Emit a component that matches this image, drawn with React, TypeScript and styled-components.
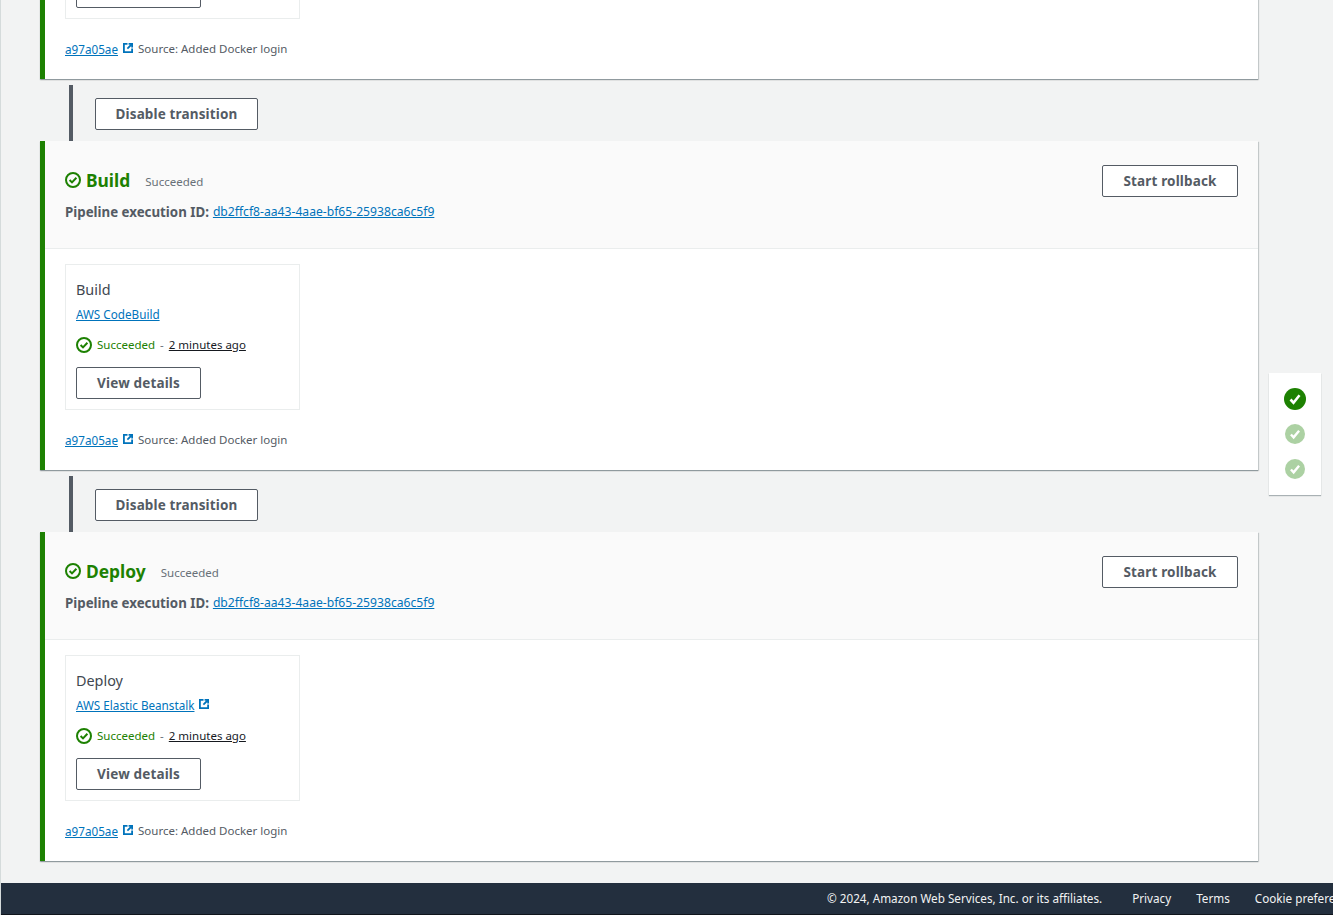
import React from "react";
import styled, { createGlobalStyle } from "styled-components";

const GlobalStyle = createGlobalStyle`
  html, body {
    margin: 0;
    padding: 0;
    height: 100%;
    overflow: hidden;
    background: #f2f3f3;
    font-family: "Noto Sans", "Liberation Sans", sans-serif;
  }
`;

interface Action {
  title: string;
  provider: string;
  external: boolean;
}

interface Stage {
  name: string;
  action: Action;
}

const stages: Stage[] = [
  { name: "Source", action: { title: "Source", provider: "GitHub (Version 2)", external: true } },
  { name: "Build", action: { title: "Build", provider: "AWS CodeBuild", external: false } },
  { name: "Deploy", action: { title: "Deploy", provider: "AWS Elastic Beanstalk", external: true } },
];

const CheckCircle = () => (
  <svg width="16" height="16" viewBox="0 0 16 16" fill="none" stroke="#1d8102" strokeWidth="2">
    <circle cx="8" cy="8" r="7" />
    <path d="M4.6 8l2.4 2.4 4.4-4.6" />
  </svg>
);

const ExternalIcon = () => (
  <IconOffset>
    <svg width="10" height="10" viewBox="0 0 10 10" fill="none" stroke="#0073bb" strokeWidth="1.8">
      <path d="M4.5 0.9H0.9v8.2h8.2V5.5" />
      <path d="M5.6 0.9h3.5v3.5" />
      <path d="M9 1L4.4 5.6" />
    </svg>
  </IconOffset>
);

const RailDot = ({ faded }: { faded?: boolean }) => (
  <DotIcon $faded={faded} viewBox="0 0 22 22">
    <circle cx="11" cy="11" r="11" fill="#1d8102" />
    <path d="M6.5 11.5l3 3.2 6-7.4" fill="none" stroke="#fff" strokeWidth="2.6" />
  </DotIcon>
);

const DotIcon = styled.svg<{ $faded?: boolean }>`
  width: ${(p) => (p.$faded ? 20 : 22)}px;
  height: ${(p) => (p.$faded ? 20 : 22)}px;
  opacity: ${(p) => (p.$faded ? 0.36 : 1)};
  margin-bottom: ${(p) => (p.$faded ? 0 : -1)}px;
`;

const IconOffset = styled.span`
  display: inline-flex;
  position: relative;
  top: -1px;
`;

const Page = styled.div`
  height: 915px;
  display: flex;
  flex-direction: column;
  position: relative;
  overflow: hidden;
  border-left: 1px solid #d5dbdb;
  box-sizing: border-box;
`;

const Main = styled.main`
  flex: 1;
  min-height: 0;
  display: flex;
  flex-direction: column;
  justify-content: flex-end;
  padding: 0 75px 22px 39px;
`;

const StageCard = styled.section`
  flex: none;
  background: #fff;
  border-left: 5px solid #1d8102;
  box-shadow: 0 1px 1px 0 rgba(0, 28, 36, 0.3), 1px 1px 1px 0 rgba(0, 28, 36, 0.15);
`;

const StageHeader = styled.header`
  height: 108px;
  box-sizing: border-box;
  padding: 24px 20px 0;
  display: flex;
  justify-content: space-between;
  align-items: flex-start;
  background: #fafafa;
  border-bottom: 1px solid #eaeded;
`;

const TitleRow = styled.div`
  display: flex;
  align-items: center;
  height: 30px;
`;

const StageTitle = styled.h2`
  margin: 0 15px 0 5px;
  font-size: 17.4px;
  line-height: 30px;
  font-weight: 700;
  color: #1d8102;
`;

const StageStatus = styled.span`
  font-size: 11.5px;
  color: #687078;
  position: relative;
  top: 1px;
`;

const ExecutionRow = styled.div`
  margin-top: 7px;
  font-size: 13.3px;
  line-height: 20px;
  display: flex;
  gap: 4px;
  align-items: center;
`;

const ExecutionLabel = styled.span`
  font-weight: 700;
  color: #545b64;
`;

const TextLink = styled.a<{ $size?: number }>`
  font-size: ${(p) => p.$size ?? 11.7}px;
  color: #0073bb;
  text-decoration: underline;
`;

const Button = styled.button<{ $width: number }>`
  width: ${(p) => p.$width}px;
  height: 32px;
  flex: none;
  padding: 0;
  background: #fff;
  border: 1px solid #545b64;
  border-radius: 2px;
  color: #545b64;
  font-family: inherit;
  font-size: 13.5px;
  font-weight: 700;
  letter-spacing: 0.15px;
`;

const StageBody = styled.div`
  padding: 15px 20px 0;
  height: 221px;
  box-sizing: border-box;
`;

const ActionCard = styled.div`
  width: 235px;
  height: 146px;
  box-sizing: border-box;
  border: 1px solid #eaeded;
  padding: 15px 10px 0;
`;

const ActionTitle = styled.div`
  font-size: 14.4px;
  line-height: 20px;
  color: #414750;
`;

const ProviderRow = styled.div`
  margin-top: 4px;
  display: flex;
  align-items: center;
  gap: 5px;
  line-height: 20px;
`;

const StatusRow = styled.div`
  margin-top: 11px;
  margin-bottom: 12px;
  display: flex;
  align-items: center;
  font-size: 11.5px;
  line-height: 20px;
  gap: 5px;
`;

const StatusText = styled.span`
  color: #1d8102;
`;

const Separator = styled.span`
  color: #687078;
`;

const TimeAgo = styled.span`
  color: #16191f;
  text-decoration: underline;
`;

const RevisionRow = styled.div`
  margin-top: 20px;
  display: flex;
  align-items: center;
  gap: 5px;
  font-size: 11.5px;
  line-height: 20px;
  color: #545b64;
`;

const Transition = styled.div`
  flex: none;
  height: 62px;
  display: flex;
  align-items: flex-start;
  padding-left: 29px;
  box-sizing: border-box;
`;

const TransitionBar = styled.div`
  width: 4px;
  height: 56px;
  margin-top: 6px;
  background: #545b64;
`;

const TransitionButton = styled(Button)`
  margin: 19px 0 0 22px;
`;

const Rail = styled.aside`
  position: absolute;
  top: 373px;
  left: 1268px;
  width: 52px;
  height: 122px;
  box-sizing: border-box;
  padding-top: 15px;
  background: #fff;
  box-shadow: 0 1px 1px 0 rgba(0, 28, 36, 0.3);
  display: flex;
  flex-direction: column;
  align-items: center;
  gap: 15px;
`;

const Footer = styled.footer`
  flex: none;
  height: 32px;
  box-sizing: border-box;
  background: #232f3e;
  border-bottom: 1px solid #10151c;
  display: flex;
  align-items: center;
  white-space: nowrap;
  padding: 0 0 2px 826px;
  font-size: 11.7px;
  color: #f2f3f3;
`;

const FooterItem = styled.span<{ $gap: number }>`
  margin-right: ${(p) => p.$gap}px;
`;

export default function App() {
  return (
    <Page>
      <GlobalStyle />
      <Main>
        {stages.map((stage, i) => (
          <React.Fragment key={stage.name}>
            {i > 0 && (
              <Transition>
                <TransitionBar />
                <TransitionButton $width={163}>Disable transition</TransitionButton>
              </Transition>
            )}
            <StageCard>
              <StageHeader>
                <div>
                  <TitleRow>
                    <CheckCircle />
                    <StageTitle>{stage.name}</StageTitle>
                    <StageStatus>Succeeded</StageStatus>
                  </TitleRow>
                  <ExecutionRow>
                    <ExecutionLabel>Pipeline execution ID:</ExecutionLabel>
                    <TextLink $size={12.15}>db2ffcf8-aa43-4aae-bf65-25938ca6c5f9</TextLink>
                  </ExecutionRow>
                </div>
                <Button $width={136}>Start rollback</Button>
              </StageHeader>
              <StageBody>
                <ActionCard>
                  <ActionTitle>{stage.action.title}</ActionTitle>
                  <ProviderRow>
                    <TextLink>{stage.action.provider}</TextLink>
                    {stage.action.external && <ExternalIcon />}
                  </ProviderRow>
                  <StatusRow>
                    <CheckCircle />
                    <StatusText>Succeeded</StatusText>
                    <Separator>-</Separator>
                    <TimeAgo>2 minutes ago</TimeAgo>
                  </StatusRow>
                  <Button $width={125}>View details</Button>
                </ActionCard>
                <RevisionRow>
                  <TextLink>a97a05ae</TextLink>
                  <ExternalIcon />
                  <span>Source: Added Docker login</span>
                </RevisionRow>
              </StageBody>
            </StageCard>
          </React.Fragment>
        ))}
      </Main>
      <Rail>
        <RailDot />
        <RailDot faded />
        <RailDot faded />
      </Rail>
      <Footer>
        <FooterItem $gap={30}>© 2024, Amazon Web Services, Inc. or its affiliates.</FooterItem>
        <FooterItem $gap={25}>Privacy</FooterItem>
        <FooterItem $gap={25}>Terms</FooterItem>
        <FooterItem $gap={0}>Cookie preferences</FooterItem>
      </Footer>
    </Page>
  );
}
